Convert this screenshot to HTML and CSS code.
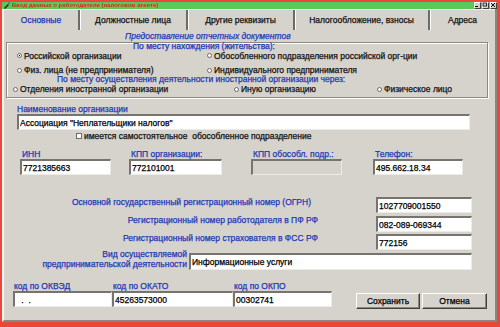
FILE: index.html
```html
<!DOCTYPE html>
<html lang="ru">
<head>
    <meta charset="UTF-8"/>
    <title>Ввод данных о работодателе</title>
    <link rel="stylesheet" href="styles.css">
</head>
<body>

<div class="window">
    <div class="titlebar">
        <svg class="app-icon" viewBox="0 0 7 7" width="7" height="7">
            <path d="M1 6 L5 2 L6 3 L2 7 Z" fill="#222"/>
            <path d="M5 1 L6 0 L7 1 L6 2 Z" fill="#555"/>
        </svg>
        <span class="title">Ввод данных о работодателе (налоговом агенте)</span>
        <div class="wbtns">
            <span class="wbtn"><svg viewBox="0 0 6 6" width="6" height="6"><path d="M1 4.5 H4" stroke="#000" stroke-width="1"/></svg></span>
            <span class="wbtn"><svg viewBox="0 0 6 6" width="6" height="6"><rect x="1" y="1" width="3.5" height="3" fill="none" stroke="#000" stroke-width="0.8"/></svg></span>
            <span class="wbtn"><svg viewBox="0 0 6 6" width="6" height="6"><path d="M1 1 L5 5 M5 1 L1 5" stroke="#000" stroke-width="0.9"/></svg></span>
        </div>
    </div>

    <div class="frame">
        <div class="tabs">
            <div class="tab tab-active tab-1">Основные</div>
            <div class="tab tab-2">Должностные лица</div>
            <div class="tab tab-3">Другие реквизиты</div>
            <div class="tab tab-4">Налогообложение, взносы</div>
            <div class="tab tab-5">Адреса</div>
        </div>

        <div class="caption">Предоставление отчетных документов</div>

        <div class="group">
            <div class="group-title gt-1">По месту нахождения (жительства):</div>
            <div class="opt-row row-1">
                <label class="opt opt-w1"><span class="radio checked"></span>Российской организации</label>
                <label class="opt"><span class="radio"></span>Обособленного подразделения российской орг-ции</label>
            </div>
            <div class="opt-row row-2">
                <label class="opt opt-w1"><span class="radio"></span>Физ. лица (не предпринимателя)</label>
                <label class="opt"><span class="radio"></span>Индивидуального предпринимателя</label>
            </div>
            <div class="group-title gt-2">По месту осуществления деятельности иностранной организации через:</div>
            <div class="opt-row row-3">
                <label class="opt opt-w3"><span class="radio"></span>Отделения иностранной организации</label>
                <label class="opt opt-w4"><span class="radio"></span>Иную организацию</label>
                <label class="opt"><span class="radio"></span>Физическое лицо</label>
            </div>
        </div>

        <div class="label name-label">Наименование организации</div>
        <input class="field name-field" value="Ассоциация &quot;Неплательщики налогов&quot;" readonly/>

        <div class="check-row"><span class="checkbox"></span>имеется самостоятельное&nbsp; обособленное подразделение</div>

        <div class="fields">
            <div class="fg fg-inn">
                <div class="label">ИНН</div>
                <input class="field" value="7721385663" readonly/>
            </div>
            <div class="fg fg-kpp">
                <div class="label">КПП организации:</div>
                <input class="field" value="772101001" readonly/>
            </div>
            <div class="fg fg-kpp2">
                <div class="label">КПП обособл. подр.:</div>
                <input class="field field-off" value="" disabled/>
            </div>
            <div class="fg fg-phone">
                <div class="label">Телефон:</div>
                <input class="field" value="495.662.18.34" readonly/>
            </div>
        </div>

        <div class="reg-row reg-ogrn">
            <div class="label reg-label">Основной государственный регистрационный номер (ОГРН)</div>
            <input class="field reg-field" value="1027709001550" readonly/>
        </div>
        <div class="reg-row reg-pf">
            <div class="label reg-label">Регистрационный номер работодателя в ПФ РФ</div>
            <input class="field reg-field" value="082-089-069344" readonly/>
        </div>
        <div class="reg-row reg-fss">
            <div class="label reg-label">Регистрационный номер страхователя в ФСС РФ</div>
            <input class="field reg-field" value="772156" readonly/>
        </div>

        <div class="kind-row">
            <div class="label kind-label">Вид осуществляемой<br>предпринимательской деятельности</div>
            <input class="field kind-field" value="Информационные услуги" readonly/>
        </div>

        <div class="bottom-row">
            <div class="fg fg-okved">
                <div class="label">код по ОКВЭД</div>
                <input class="field okved" value=" .  ." readonly/>
            </div>
            <div class="fg fg-okato">
                <div class="label">код по ОКАТО</div>
                <input class="field" value="45263573000" readonly/>
            </div>
            <div class="fg fg-okpo">
                <div class="label">код по ОКПО</div>
                <input class="field" value="00302741" readonly/>
            </div>
            <div class="buttons">
                <button class="btn btn-save">Сохранить</button>
                <button class="btn btn-cancel">Отмена</button>
            </div>
        </div>
    </div>
</div>

</body>
</html>
```

FILE: styles.css
```css
* {
  box-sizing: border-box;
}

body {
  margin: 0;
  background: #e9473c;
  font-family: "Liberation Sans", Arial, sans-serif;
  font-size: 8.5px;
  color: #111;
  -webkit-text-stroke: 0.25px currentColor;
}

.window {
  margin: 2px 3px 0 2px;
  height: 320px;
  display: flex;
  flex-direction: column;
}

/* title bar */
.titlebar {
  height: 7px;
  background: #58c95a;
  display: flex;
  align-items: center;
  padding-left: 1px;
}

.app-icon {
  display: block;
}

.title {
  margin-left: 2px;
  color: #e0261c;
  font-size: 6px;
  font-weight: bold;
  line-height: 7px;
  -webkit-text-stroke: 0;
}

.wbtns {
  margin-left: auto;
  display: flex;
  gap: 1px;
}

.wbtn {
  width: 7px;
  height: 7px;
  background: #d4d0c8;
  border: 1px solid;
  border-color: #fff #404040 #404040 #fff;
  display: flex;
}

.wbtn svg {
  display: block;
  margin: -1px 0 0 -1px;
}

/* main frame */
.frame {
  flex: 1;
  background: #d6d3cd;
  border-left: 2px solid #f4f3f0;
  border-right: 2px solid #8a8780;
  border-bottom: 2px solid #8a8780;
}

.tabs {
  display: flex;
  height: 21px;
  border-top: 1px solid #f2f1ee;
}

.tab {
  display: flex;
  align-items: center;
  justify-content: center;
  border-right: 2px solid #6e6b66;
  box-shadow: inset 1px 0 #fff;
  color: #111;
}

.tab-active {
  color: #2238b4;
  box-shadow: none;
}

.tab-1 { width: 76px; }
.tab-2 { width: 108px; }
.tab-3 { width: 107px; }
.tab-4 { width: 135px; }
.tab-5 { flex: 1; border-right: none; }

.caption {
  margin-top: 1px;
  height: 11px;
  line-height: 11px;
  padding-left: 121px;
  color: #2238b4;
  font-style: italic;
}

/* radio group */
.group {
  margin: 0 7px 0 2px;
  height: 56px;
  border: 1px solid #8c8983;
  box-shadow: inset 1px 1px #fff, 1px 1px #fff;
}

.group-title {
  color: #2238b4;
}

.gt-1 {
  height: 7px;
  line-height: 7px;
  padding-left: 126px;
}

.gt-2 {
  height: 6px;
  line-height: 6px;
  padding-left: 50px;
}

.opt-row {
  display: flex;
  align-items: center;
}

.row-1 {
  height: 11px;
  padding-left: 10px;
}

.row-2 {
  margin-top: 3px;
  height: 12px;
  padding-left: 10px;
}

.row-3 {
  height: 14px;
  padding-left: 6px;
}

.opt {
  display: flex;
  align-items: center;
  white-space: nowrap;
}

.opt-w1 { width: 190px; }
.opt-w3 { width: 221px; }
.opt-w4 { width: 143px; }

.radio {
  width: 5px;
  height: 5px;
  margin-right: 2px;
  border-radius: 50%;
  background: #fff;
  border: 1px solid #6b6b6b;
  position: relative;
}

.radio.checked::after {
  content: "";
  position: absolute;
  left: 1px;
  top: 1px;
  width: 1px;
  height: 1px;
  background: #000;
}

/* labels and fields */
.label {
  color: #2238b4;
  line-height: 10px;
  white-space: nowrap;
}

.field {
  display: block;
  height: 16px;
  margin: 0;
  padding: 0 0 0 1px;
  font: inherit;
  color: #000;
  background: #fff;
  border-style: solid;
  border-width: 2px 1px 1px 2px;
  border-color: #77746f #ecebe8 #ecebe8 #77746f;
  outline: none;
}

.field-off {
  background: #d6d3cd;
}

.name-label {
  margin-top: 6px;
  padding-left: 13px;
}

.name-field {
  margin-left: 13px;
  width: 453px;
}

.check-row {
  height: 12px;
  line-height: 12px;
  padding-left: 72px;
  display: flex;
  align-items: center;
}

.checkbox {
  width: 6px;
  height: 6px;
  margin-right: 2px;
  background: #fff;
  border: 1px solid #6b6b6b;
}

.fields {
  margin-top: 7px;
  display: flex;
}

.fg .label {
  padding-left: 2px;
}

.fg-inn { margin-left: 16px; width: 91px; }
.fg-kpp { margin-left: 18px; width: 93px; }
.fg-kpp2 { margin-left: 29px; width: 91px; }
.fg-phone { margin-left: 31px; width: 90px; }

.fg .field {
  width: 100%;
}

/* registration numbers */
.reg-row {
  display: flex;
  height: 16px;
}

.reg-ogrn { margin-top: 22px; }
.reg-pf { margin-top: 3px; }
.reg-fss { margin-top: 2px; }

.reg-label {
  width: 314px;
  text-align: right;
  line-height: 9px;
}

.reg-ogrn .reg-label {
  padding-right: 7px;
  line-height: 10px;
}

.reg-field {
  margin-left: 58px;
  width: 96px;
}

.kind-row {
  display: flex;
  margin-top: -1px;
}

.kind-label {
  width: 183px;
  text-align: right;
}

.kind-field {
  margin: 4px 0 0 2px;
  width: 283px;
  height: 17px;
}

/* bottom */
.bottom-row {
  display: flex;
  margin-top: 12px;
}

.bottom-row .label {
  line-height: 9px;
  padding-left: 1px;
}

.fg-okved { margin-left: 9px; width: 99px; }
.fg-okato { width: 121px; }
.fg-okpo { width: 99px; }

.okved {
  padding-left: 4px;
}

.buttons {
  display: flex;
  gap: 2px;
  margin: 11px 0 0 24px;
}

.btn {
  height: 16px;
  padding: 0;
  font: inherit;
  color: #000;
  background: #d6d3cd;
  border: 1px solid;
  border-color: #fff #404040 #404040 #fff;
  box-shadow: inset -1px -1px #8a8780;
}

.btn-save { width: 64px; }
.btn-cancel { width: 65px; }
```
